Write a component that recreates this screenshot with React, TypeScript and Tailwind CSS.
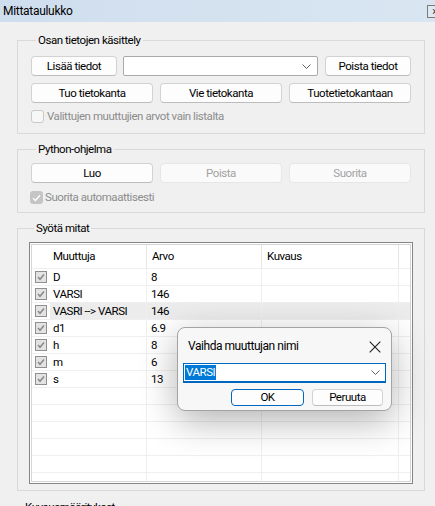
import React from "react";

type Row = { name: string; value: string; selected?: boolean };

const rows: Row[] = [
  { name: "D", value: "8" },
  { name: "VARSI", value: "146" },
  { name: "VASRI --> VARSI", value: "146", selected: true },
  { name: "d1", value: "6.9" },
  { name: "h", value: "8" },
  { name: "m", value: "6" },
  { name: "s", value: "13" },
];

// enough blank rows to fill the list down to its bottom border
const EMPTY_ROWS = 6;

function Chevron() {
  return (
    <svg width="9" height="5" viewBox="0 0 9 5" className="shrink-0">
      <path d="M0.5 0.5 L4.5 4.5 L8.5 0.5" fill="none" stroke="#5f5f5f" strokeWidth="1" />
    </svg>
  );
}

function Button({
  children,
  disabled,
  primary,
  className = "",
}: {
  children: React.ReactNode;
  disabled?: boolean;
  primary?: boolean;
  className?: string;
}) {
  const look = disabled
    ? "bg-[#fafafa] border-[#e6e6e6] text-[#a2a2a2]"
    : primary
      ? "bg-[#fdfdfd] border-[#0067c0] text-black"
      : "bg-[#fdfdfd] border-[#d2d2d2] border-b-[#bdbdbd] text-black";
  return (
    <div className={`flex items-center justify-center rounded-[4px] border ${look} ${className}`}>
      {children}
    </div>
  );
}

function GroupBox({
  title,
  children,
  className = "",
}: {
  title: string;
  children: React.ReactNode;
  className?: string;
}) {
  return (
    <fieldset className={`border border-[#d9d9d9] ${className}`}>
      <legend className="ml-[5px] px-[2px] leading-[15px] text-black">{title}</legend>
      {children}
    </fieldset>
  );
}

function RowCheck() {
  return (
    <div className="flex h-[12px] w-[12px] shrink-0 items-center justify-center border border-[#8f8f8f] bg-[#e3e3e3]">
      <svg width="8" height="8" viewBox="0 0 8 8">
        <path d="M1 4 L3 6.2 L7 1.5" fill="none" stroke="#8a8a8a" strokeWidth="1.6" />
      </svg>
    </div>
  );
}

function ListRow({ row }: { row?: Row }) {
  const sel = row?.selected ? "bg-[#ececec]" : "";
  return (
    <div className="grid h-[17px] shrink-0 grid-cols-[115px_115px_137px_1fr] border-b border-[#efefef]">
      <div className="flex items-center border-r border-[#efefef] pl-[3px]">
        {row && <RowCheck />}
        <div className={`ml-[3px] flex h-full flex-1 items-center pl-[3px] ${sel}`}>{row?.name}</div>
      </div>
      <div className={`flex items-center border-r border-[#efefef] pl-[4px] ${sel}`}>{row?.value}</div>
      <div className={`border-r border-[#efefef] ${sel}`} />
      <div className={sel} />
    </div>
  );
}

function RenameDialog() {
  return (
    <div className="absolute left-[177px] top-[327px] flex h-[84px] w-[215px] flex-col rounded-[8px] border border-[#a3a3a3] bg-[#f7f7f7] shadow-[0_10px_36px_rgba(0,0,0,0.3)]">
      <div className="mt-[10px] flex h-[17px] items-center justify-between pl-[10px] pr-[10px]">
        <span className="text-[12px]">Vaihda muuttujan nimi</span>
        <svg width="12" height="12" viewBox="0 0 12 12">
          <path d="M0.7 0.7 L11.3 11.3 M11.3 0.7 L0.7 11.3" stroke="#1f1f1f" strokeWidth="1.1" />
        </svg>
      </div>
      <div className="mx-[5px] mt-[8px] flex h-[20px] items-center justify-between border border-[#0067c0] border-b-2 bg-white pl-px pr-[5px]">
        <span className="bg-[#0078d7] px-px leading-[15px] text-white">VARSI</span>
        <Chevron />
      </div>
      <div className="mt-[6px] flex justify-end gap-[8px] pr-[8px]">
        <Button primary className="h-[17px] w-[73px]">
          OK
        </Button>
        <Button className="h-[17px] w-[71px]">Peruuta</Button>
      </div>
    </div>
  );
}

export default function App() {
  return (
    <div className="relative h-[506px] w-[435px] overflow-hidden bg-[#f0f0f0] font-['Roboto','Liberation_Sans',sans-serif] text-[11.5px] leading-[15px] tracking-[-0.45px] text-black">
      {/* window caption */}
      <div className="flex h-[22px] items-center overflow-hidden bg-gradient-to-r from-[#cfdeee] to-[#d9e6f2] pl-[3px]">
        <span className="text-[12px] tracking-[-0.3px]">Mittataulukko</span>
        <div className="-mr-[8px] ml-auto flex h-[13px] w-[16px] shrink-0 items-center justify-center border border-[#7a7a7a] bg-[#dfe9f4] text-[11px] leading-none text-[#333]">
          ×
        </div>
      </div>

      <div className="flex flex-col pl-[17px] pr-[10px]">
        <GroupBox title="Osan tietojen käsittely" className="mt-[11px] px-[13px] pb-[8px] pt-[8px]">
          <div className="flex h-[20px] gap-[6px]">
            <Button className="w-[86px]">Lisää tiedot</Button>
            <div className="flex w-[195px] items-center justify-end rounded-[2px] border border-[#a9a9a9] bg-white pr-[6px]">
              <Chevron />
            </div>
            <Button className="ml-px w-[86px]">Poista tiedot</Button>
          </div>
          <div className="mt-[7px] grid h-[20px] grid-cols-3 gap-[7px]">
            <Button>Tuo tietokanta</Button>
            <Button>Vie tietokanta</Button>
            <Button>Tuotetietokantaan</Button>
          </div>
          <div className="mt-[5px] flex h-[17px] items-center gap-[3px] text-[#8c8c8c]">
            <div className="h-[13px] w-[13px] rounded-[3px] border border-[#c9c9c9] bg-[#f7f7f7]" />
            <span>Valittujen muuttujien arvot vain listalta</span>
          </div>
        </GroupBox>

        <GroupBox title="Python-ohjelma" className="mt-[8px] px-[13px] pb-[6px] pt-[6px]">
          <div className="grid h-[20px] grid-cols-3 gap-[7px]">
            <Button>Luo</Button>
            <Button disabled>Poista</Button>
            <Button disabled>Suorita</Button>
          </div>
          <div className="mt-[6px] flex h-[17px] items-center gap-[2px] text-[#8c8c8c]">
            <div className="-ml-[1px] flex h-[13px] w-[13px] items-center justify-center rounded-[3px] bg-[#c5c5c5]">
              <svg width="9" height="8" viewBox="0 0 9 8">
                <path d="M1 4.2 L3.4 6.5 L8 1.3" fill="none" stroke="#ffffff" strokeWidth="1.3" />
              </svg>
            </div>
            <span>Suorita automaattisesti</span>
          </div>
        </GroupBox>

        <GroupBox title="Syötä mitat" className="mt-[8px] px-[11px] pb-[6px] pt-[6px]">
          <div className="h-[242px] border border-[#858585] bg-white p-px">
            <div className="flex h-full flex-col overflow-hidden border border-[#d5d5d5]">
              <div className="grid h-[24px] shrink-0 grid-cols-[115px_115px_137px_1fr] border-b border-[#efefef]">
                <div className="flex items-center border-r border-[#e5e5e5] pl-[21px]">Muuttuja</div>
                <div className="flex items-center border-r border-[#e5e5e5] pl-[5px]">Arvo</div>
                <div className="flex items-center border-r border-[#e5e5e5] pl-[5px]">Kuvaus</div>
                <div />
              </div>
              {rows.map((r) => (
                <ListRow key={r.name} row={r} />
              ))}
              {Array.from({ length: EMPTY_ROWS }, (_, i) => (
                <ListRow key={`empty-${i}`} />
              ))}
            </div>
          </div>
        </GroupBox>

        <div className="mt-[9px] pl-[8px]">Kuvausmääritykset</div>
      </div>

      <RenameDialog />
    </div>
  );
}
